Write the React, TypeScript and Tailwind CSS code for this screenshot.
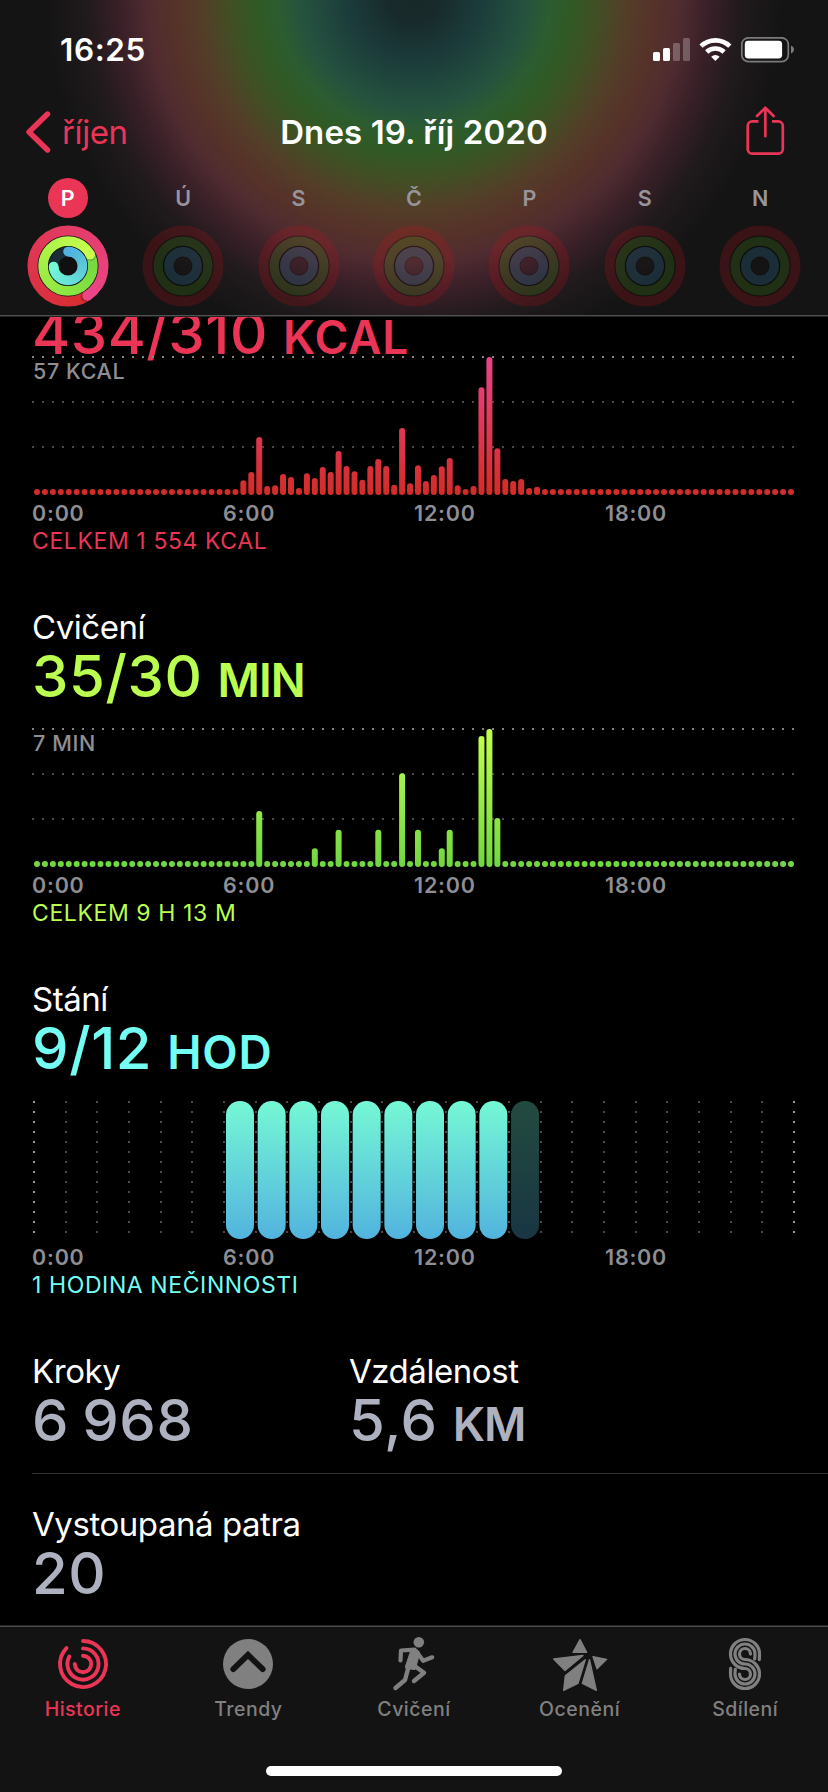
import type { ReactNode } from 'react';

const DAYS = ['P', 'Ú', 'S', 'Č', 'P', 'S', 'N'];
const HOURS = ['0:00', '6:00', '12:00', '18:00'];

// bar heights in px, one per quarter of an hour, keyed by slot
const MOVE: Record<number, number> = {
  26: 14.7, 27: 23, 28: 58, 29: 9, 30: 9.7, 31: 21, 32: 18, 33: 7, 34: 21.7, 35: 17, 36: 28, 37: 23,
  38: 44, 39: 29, 40: 23.7, 41: 15.3, 42: 29, 43: 36, 44: 29, 45: 10.3, 46: 67, 47: 11.7, 48: 29.7,
  49: 14, 50: 20, 51: 28.7, 52: 37, 53: 9.7, 55: 9, 56: 107.7, 57: 138, 58: 46.7, 59: 16, 60: 14,
  61: 16, 62: 7, 63: 8.3,
};
const EXERCISE: Record<number, number> = {
  28: 56, 35: 18.7, 38: 37.3, 43: 37.3, 46: 93.7, 48: 37.3, 51: 18.7, 52: 37.3, 56: 131, 57: 138, 58: 49,
};

type Rgb = [number, number, number];

const mix = (a: Rgb, b: Rgb, t: number) =>
  `rgb(${a.map((v, i) => Math.round(v + (b[i] - v) * t)).join(',')})`;

const point = (r: number, deg: number) => {
  const a = ((deg - 90) * Math.PI) / 180;
  return [41 + r * Math.cos(a), 41 + r * Math.sin(a)];
};

const arc = (r: number, from: number, to: number) => {
  const [x1, y1] = point(r, from);
  const [x2, y2] = point(r, to);
  return `M${x1} ${y1}A${r} ${r} 0 ${to - from > 180 ? 1 : 0} 1 ${x2} ${y2}`;
};

const SweepRing = ({ r, w, from, to, start, end }: { r: number; w: number; from: number; to: number; start: Rgb; end: Rgb }) => {
  const steps = 60;
  const size = (to - from) / steps;
  const [sx, sy] = point(r, from);
  const [tx, ty] = point(r, to);
  const [hx, hy] = point(r, to + 3);
  const maskId = `ring-${Math.round(r)}`;
  return (
    <g fill="none">
      <mask id={maskId} maskUnits="userSpaceOnUse" x="0" y="0" width="82" height="82">
        <circle cx="41" cy="41" r={r} stroke="#fff" strokeWidth={w} />
      </mask>
      {to - from < 359 && <circle cx={sx} cy={sy} r={w / 2} fill={mix(start, end, 0)} />}
      <g mask={`url(#${maskId})`} strokeWidth={w + 2}>
        {Array.from({ length: steps }, (_, i) => (
          <path
            key={i}
            d={arc(r, from + i * size, from + (i + 1) * size + (i < steps - 1 ? 3 : 0))}
            stroke={mix(start, end, i / (steps - 1))}
          />
        ))}
        {to - from > 359 && <circle cx={hx} cy={hy} r={w / 2} fill="rgba(0,0,0,.25)" />}
      </g>
      <circle cx={tx} cy={ty} r={w / 2} fill={mix(start, end, 1)} />
    </g>
  );
};

const Rings = ({ active }: { active: boolean }) => (
  <svg width="82" height="82" viewBox="0 0 82 82">
    {active ? (
      <>
        <circle cx="41" cy="41" r="31" fill="#101010" />
        <SweepRing r={35.5} w={10} from={-213} to={147} start={[216, 44, 48]} end={[234, 70, 136]} />
        <SweepRing r={24.9} w={9.7} from={-297} to={63} start={[112, 216, 62]} end={[200, 255, 78]} />
        <circle cx="41" cy="41" r="14.4" fill="none" stroke="#1a2d36" strokeWidth="9.6" />
        <SweepRing r={14.4} w={9.6} from={0} to={268} start={[80, 178, 222]} end={[116, 248, 214]} />
      </>
    ) : (
      <g fill="none">
        <circle cx="41" cy="41" r="35.4" stroke="rgba(205,15,25,.2)" strokeWidth="10.2" />
        <circle cx="41" cy="41" r="30" stroke="rgba(0,0,0,.3)" strokeWidth="1.2" />
        <circle cx="41" cy="41" r="24.8" stroke="rgba(80,160,20,.2)" strokeWidth="9.6" />
        <circle cx="41" cy="41" r="19.6" stroke="rgba(0,0,0,.45)" strokeWidth="1.4" />
        <circle cx="41" cy="41" r="14.2" stroke="rgba(55,140,180,.22)" strokeWidth="9.6" />
        <circle cx="41" cy="41" r="9" stroke="rgba(0,0,0,.2)" strokeWidth="1" />
      </g>
    )}
  </svg>
);

const StatusBar = () => (
  <div className="flex h-[99px] items-center justify-between pl-[60px] pr-[33px]">
    <span className="text-[31.5px] font-semibold tracking-[0.6px] text-white">16:25</span>
    <svg width="142" height="26" viewBox="653 37 142 26" className="shrink-0">
      <g fill="#fff">
        <rect x="653" y="52" width="7" height="9" rx="1.6" />
        <rect x="663" y="48" width="7" height="13" rx="1.6" />
        <rect x="673" y="43" width="7" height="18" rx="1.6" opacity=".25" />
        <rect x="683" y="38" width="7" height="23" rx="1.6" opacity=".25" />
      </g>
      <g fill="none" stroke="#fff" strokeWidth="4.6">
        <path d="M701 46.2a20.6 20.6 0 0 1 28.8 0" />
        <path d="M706.7 52a12.6 12.6 0 0 1 17.4 0" />
      </g>
      <path d="M715.4 61l-4.2-4.3a6.3 6.3 0 0 1 8.4 0z" fill="#fff" />
      <rect x="741.8" y="37.8" width="46.5" height="23.8" rx="6.6" fill="none" stroke="#7b7b7b" strokeWidth="1.7" />
      <rect x="744.8" y="40.8" width="37.3" height="17.6" rx="3.4" fill="#fff" />
      <path d="M791 45.8c1.8.6 3 2 3 3.8s-1.2 3.2-3 3.8z" fill="#7b7b7b" />
    </svg>
  </div>
);

const NavBar = () => (
  <div className="grid h-[66px] grid-cols-[1fr_auto_1fr] items-center px-[25px]">
    <div className="flex items-center gap-[11px] text-[#ea3556]">
      <svg width="26" height="44" viewBox="0 0 26 44" fill="none" stroke="currentColor" strokeWidth="5.4" strokeLinecap="round" strokeLinejoin="round">
        <path d="M22.5 4L4 22l18.5 18" />
      </svg>
      <span className="text-[33px] leading-[40px] tracking-[-0.4px]">říjen</span>
    </div>
    <h1 className="text-[33px] leading-[40px] font-semibold tracking-[0.1px] text-white">Dnes 19. říj 2020</h1>
    <svg width="40" height="50" viewBox="0 0 40 50" fill="none" stroke="#ea3556" strokeWidth="2.7" strokeLinecap="round" strokeLinejoin="round" className="-mt-[2px] mr-[18px] ml-auto">
      <path d="M13.5 15.3H7.2a4.5 4.5 0 0 0-4.5 4.5V43.2a4.5 4.5 0 0 0 4.5 4.5H33.3a4.5 4.5 0 0 0 4.5-4.5V19.8a4.5 4.5 0 0 0-4.5-4.5H27" strokeLinecap="butt" />
      <path d="M20.3 30.2V2.2M12 10l8.3-8.2L28.6 10" />
    </svg>
  </div>
);

const Header = () => (
  <header className="h-[317px] shrink-0 border-b border-[#232323] bg-[#141414] bg-[radial-gradient(circle_at_414px_-4px,#182929_0px,#182a2b_25px,#1b3b3a_65px,#25523f_112px,#2c5c30_136px,#305a25_156px,#405024_182px,#533e28_212px,#563229_240px,#502c30_265px,#3a2028_294px,#201a1c_327px,#141414_370px)]">
    <div className="h-[316px] border-b border-[#505050]">
      <StatusBar />
      <NavBar />
      <div className="flex w-[818px] pl-[10px] pt-[13px]">
        {DAYS.map((day, i) => (
          <div key={i} className="flex flex-1 flex-col items-center gap-[7px]">
            <span
              className={
                i === 0
                  ? 'flex size-10 items-center justify-center rounded-full bg-[#ea3556] text-[21.5px] font-semibold text-white'
                  : 'flex size-10 items-center justify-center text-[21.5px] font-semibold text-[#98949b]'
              }
            >
              {day}
            </span>
            <Rings active={i === 0} />
          </div>
        ))}
      </div>
    </div>
  </header>
);

const Title = ({ children }: { children: ReactNode }) => (
  <h2 className="h-[39px] text-[33px] leading-[40px] tracking-[-0.45px] whitespace-nowrap text-white">{children}</h2>
);

const Value = ({ value, unit, unitClass = 'tracking-[0.8px]', className }: { value: string; unit?: string; unitClass?: string; className: string }) => (
  <p className={`h-[60px] text-[58px] leading-[60px] font-medium tracking-[0.6px] [word-spacing:-3px] whitespace-nowrap ${className}`}>
    {value}
    {unit && <span className={`ml-[15px] text-[46px] font-semibold ${unitClass}`}>{unit}</span>}
  </p>
);

const Hours = () => (
  <div className="mt-1 grid h-[28px] w-[764px] grid-cols-4 text-[21.5px] leading-[27px] font-semibold tracking-[0.8px] text-[#8e8e93]">
    {HOURS.map((h) => (
      <span key={h}>{h}</span>
    ))}
  </div>
);

const Total = ({ children, className }: { children: ReactNode; className: string }) => (
  <p className={`h-[26px] text-[23px] leading-[26px] tracking-[0.6px] whitespace-nowrap ${className}`}>{children}</p>
);

const BarChart = ({ id, peak, data, top, bottom }: { id: string; peak: string; data: Record<number, number>; top: string; bottom: string }) => (
  <div className="relative h-[140px]">
    <svg width="764" height="140" viewBox="32 0 764 140">
      <defs>
        <linearGradient id={id} gradientUnits="userSpaceOnUse" x1="0" y1="1" x2="0" y2="139">
          <stop offset="0" stopColor={top} />
          <stop offset="1" stopColor={bottom} />
        </linearGradient>
      </defs>
      {[1, 46, 91].map((y) => (
        <path key={y} d={`M32 ${y}H795`} stroke={y === 1 ? '#858585' : '#4a4a4a'} strokeWidth="2" strokeDasharray="2 8" />
      ))}
      {Array.from({ length: 96 }, (_, i) => {
        const h = data[i] ?? 6;
        return <rect key={i} x={34 + i * 7.937} y={139 - h} width="6" height={h} rx="3" fill={`url(#${id})`} />;
      })}
    </svg>
    <span className="absolute top-[2px] left-px text-[21.5px] leading-[27px] font-medium tracking-[0.6px] text-[#8e8e93]">{peak}</span>
  </div>
);

const StandChart = () => (
  <svg width="764" height="140" viewBox="32 0 764 140" className="block">
    <defs>
      <linearGradient id="stand" x1="0" y1="0" x2="0" y2="1">
        <stop offset="0" stopColor="#75f8d4" />
        <stop offset="1" stopColor="#52b3de" />
      </linearGradient>
    </defs>
    {Array.from({ length: 25 }, (_, i) => (
      <path
        key={i}
        d={`M${Math.round(34 + i * 31.67)} 1V134`}
        stroke={i === 0 || i === 24 ? '#9a9a9a' : '#4a4a4a'}
        strokeWidth="2"
        strokeDasharray="2 8"
      />
    ))}
    {Array.from({ length: 10 }, (_, i) => (
      <rect key={i} x={226 + i * 31.67} y="1" width="28" height="138" rx="14" fill="url(#stand)" opacity={i === 9 ? 0.3 : 1} />
    ))}
  </svg>
);

const Section = ({ children }: { children: ReactNode }) => <section className="mt-[53px]">{children}</section>;

const HistoryIcon = () => (
  <svg width="56" height="56" viewBox="13 13 56 56" fill="none" stroke="currentColor" strokeWidth="3.9" strokeLinecap="round">
    <path d={arc(23, 0, 314)} />
    <path d={arc(15.6, 0, 299)} />
    <path d={arc(8.2, 0, 270)} />
  </svg>
);

const TrendsIcon = () => (
  <svg width="56" height="56" viewBox="0 0 56 56">
    <circle cx="28" cy="28" r="25" fill="currentColor" />
    <path d="M13.3 33.2L28 18.9l14.7 14.3" fill="none" stroke="#131313" strokeWidth="5.8" strokeLinecap="round" />
  </svg>
);

const WorkoutIcon = () => (
  <svg width="56" height="56" viewBox="386 1636 56 56" fill="none" stroke="currentColor" strokeWidth="4.2" strokeLinecap="round" strokeLinejoin="round">
    <circle cx="418.8" cy="1642.3" r="5.3" fill="currentColor" stroke="none" />
    <path d="M400.5 1660.5l.5-10 13.5-.8" />
    <path d="M416 1651l7.2 9.8 9-3.5" />
    <path d="M412.5 1650.5l-5.5 16.5 7 1 4-15z" fill="currentColor" />
    <path d="M408.5 1667l-3.5 13-9.5 8" strokeWidth="4.4" />
    <path d="M412.5 1664.5l11.5 8.3-10 8.2" strokeWidth="4.4" />
  </svg>
);

const AwardsIcon = () => (
  <svg width="56" height="56" viewBox="411 78 168 168" fill="currentColor" stroke="currentColor" strokeWidth="4" strokeLinejoin="round">
    <path d="M495 89l20 38h-41z" />
    <path d="M416 147l88-10.5-54 45z" />
    <path d="M511 149l-22 71-43 21 5-44z" />
    <path d="M523.5 149l20.5 92-42-21z" />
    <path d="M534 140l41 8-29 28.5z" />
  </svg>
);

const SharingIcon = () => (
  <svg width="56" height="56" viewBox="906 78 168 168" fill="none" stroke="currentColor" strokeWidth="9.6" strokeLinecap="round">
    <path d="M1033 149c.4-5 .5-10 .5-17a43.5 43.5 0 1 0-43.5 43.5a16.5 16.5 0 1 1-16.5 16.5" />
    <path d="M1019 147c.7-5 1-9 1-15a30 30 0 1 0-30 30a30 30 0 1 1-30 30c0-5 .3-9 1-14" />
    <path d="M1006.5 132a16.5 16.5 0 1 0-16.5 16.5a43.5 43.5 0 1 1-43.5 43.5c0-7 .1-12 .5-17" />
  </svg>
);

const TABS = [
  { label: 'Historie', Icon: HistoryIcon },
  { label: 'Trendy', Icon: TrendsIcon },
  { label: 'Cvičení', Icon: WorkoutIcon },
  { label: 'Ocenění', Icon: AwardsIcon },
  { label: 'Sdílení', Icon: SharingIcon },
];

const TabBar = () => (
  <nav className="flex h-[167px] shrink-0 flex-col items-center border-t border-[#262626] bg-[#131313]">
    <div className="flex w-full border-t border-[#4c4c4c] pt-[9px]">
      {TABS.map(({ label, Icon }, i) => (
        <div key={label} className={i === 0 ? 'flex flex-1 flex-col items-center text-[#ea3556]' : 'flex flex-1 flex-col items-center text-[#808080]'}>
          <Icon />
          <span className="mt-[4px] text-[19.5px] leading-[26px] font-medium tracking-[0.5px]">{label}</span>
        </div>
      ))}
    </div>
    <div className="mt-[44px] h-[10px] w-[296px] rounded-full bg-white" />
  </nav>
);

const App = () => (
  <div className="flex h-[1792px] w-[828px] flex-col overflow-hidden bg-black font-['Inter',sans-serif]">
    <Header />
    <main className="min-h-0 flex-1 overflow-hidden pl-[32px]">
      <div className="-mt-[14px]">
        <Value value="434/310" unit="KCAL" className="text-[#ea3556]" />
        <div className="-mt-[7px]">
          <BarChart id="move" peak="57 KCAL" data={MOVE} top="#ea4488" bottom="#d32c26" />
        </div>
        <Hours />
        <Total className="text-[#ea3556]">CELKEM 1 554 KCAL</Total>
      </div>
      <Section>
        <Title>Cvičení</Title>
        <Value value="35/30" unit="MIN" unitClass="tracking-[-1px]" className="mb-[22px] text-[#baff4f]" />
        <BarChart id="exercise" peak="7 MIN" data={EXERCISE} top="#c2ff4e" bottom="#70d73f" />
        <Hours />
        <Total className="text-[#baff4f]">CELKEM 9 H 13 M</Total>
      </Section>
      <Section>
        <Title>Stání</Title>
        <Value value="9/12" unit="HOD" className="mb-[22px] text-[#74fdf3]" />
        <StandChart />
        <Hours />
        <Total className="text-[#74fdf3]">1 HODINA NEČINNOSTI</Total>
      </Section>
      <Section>
        <div className="flex border-b border-[#303032] pb-[23px]">
          <div className="w-[317px]">
            <Title>Kroky</Title>
            <Value value="6 968" className="text-[#aeb1bf]" />
          </div>
          <div>
            <Title>Vzdálenost</Title>
            <Value value="5,6" unit="KM" unitClass="tracking-[-1px]" className="text-[#aeb1bf]" />
          </div>
        </div>
        <div className="mt-[30px]">
          <Title>Vystoupaná patra</Title>
          <Value value="20" className="text-[#aeb1bf]" />
        </div>
      </Section>
    </main>
    <TabBar />
  </div>
);

export default App;
